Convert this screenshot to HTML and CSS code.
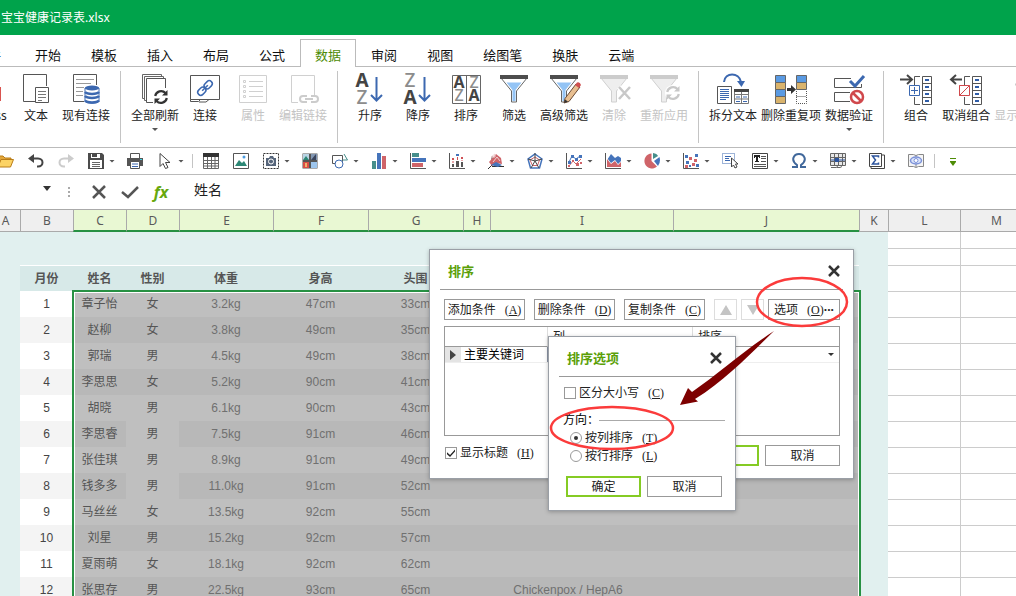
FILE: index.html
```html
<!DOCTYPE html>
<html lang="zh-CN">
<head>
<meta charset="utf-8">
<title>宝宝健康记录表.xlsx</title>
<link rel="stylesheet" href="styles.css">
</head>
<body>
<svg class="defs" width="0" height="0" aria-hidden="true">
  <defs>
    <symbol id="cells" viewBox="0 0 10 29"><path d="M.5.5h9v28h-9zM.5 7.5h9M.5 14.5h9M.5 21.5h9" fill="#fff" stroke="#555"/><path d="M3 4h4M3 11h4M3 18h4M3 25h4" stroke="#2f5da8" stroke-width="2"/></symbol>
    <symbol id="cycle" viewBox="0 0 16 16"><path d="M2.200 7a6 6 0 0 1 10.300-3M13.800 9A6 6 0 0 1 3.500 12" fill="none" stroke="currentColor" stroke-width="2.200"/><path d="M14.500 1v5.500H9zM1.500 15V9.500H7z" fill="currentColor"/></symbol>
    <symbol id="funnel" viewBox="0 0 32 32"><path d="M3 5h26L18.500 18v11h-5V18z" fill="#fff" stroke="#666"/><path d="M8.500 9.500h15L17.500 17v11h-3V17z" fill="#94c4f5"/><path d="M2 2h28v4H2z" fill="#4d4d4d"/></symbol>
    <symbol id="funnel-off" viewBox="0 0 32 32"><path d="M3 5h26L18.500 18v11h-5V18z" fill="#eee" stroke="#d0d0d0"/><path d="M2 2h28v4H2z" fill="#ccc"/></symbol>
  </defs>
</svg>

<header class="titlebar">宝宝健康记录表.xlsx</header>

<nav class="tabs">
  <button class="tab">文件</button>
  <button class="tab">开始</button>
  <button class="tab">模板</button>
  <button class="tab">插入</button>
  <button class="tab">布局</button>
  <button class="tab">公式</button>
  <button class="tab active">数据</button>
  <button class="tab">审阅</button>
  <button class="tab">视图</button>
  <button class="tab">绘图笔</button>
  <button class="tab">换肤</button>
  <button class="tab">云端</button>
</nav>

<section class="ribbon">
  <div class="group first">
    <button class="tool"><svg viewBox="0 0 32 32"><path d="M4 14h25v14H4z" fill="#d9534f"/></svg><span>Access</span></button>
    <button class="tool"><svg viewBox="0 0 32 32"><path d="M15 28.500H3.500v-27h23V13" fill="#fff" stroke="#555"/><path d="M15.500 14.500h13v15h-13z" fill="#fff" stroke="#555"/><path d="M18 18.500h8M18 21.500h8M18 24.500h8M18 27.500h4" stroke="#777"/></svg><span>文本</span></button>
    <button class="tool"><svg viewBox="0 0 32 32"><path d="M14 28.500H3.500v-27h23V12" fill="#fff" stroke="#555"/><path d="M6 6.500h18M6 10.500h15M6 14.500h8M6 18.500h7M6 22.500h7" stroke="#999"/><path d="M15 15v13c0 3 14 3 14 0V15z" fill="#fff" stroke="#3c68b0"/><ellipse cx="22" cy="15" rx="7" ry="2.500" fill="#3c68b0"/><path d="M15 19c2 2.500 12 2.500 14 0M15 23c2 2.500 12 2.500 14 0M15 27.500c2 2.500 12 2.500 14 0" fill="none" stroke="#3c68b0" stroke-width="2.500"/></svg><span>现有连接</span></button>
  </div>
  <div class="group">
    <button class="tool"><svg viewBox="0 0 32 32"><path d="M6 25.500H3.500v-24h19V3M8.500 27.500h-3v-24h19V5" fill="none" stroke="#666"/><path d="M14 29.500H7.500v-24h19V15" fill="#fff" stroke="#555"/><use href="#cycle" x="14" y="16" width="16" height="16" color="#333"/></svg><span>全部刷新</span><i class="caret"></i></button>
    <button class="tool"><svg viewBox="0 0 32 32"><path d="M1.500 2.500h29v24h-29z" fill="#fff" stroke="#555"/><path d="M1.500 26.500v2h8l2-2M10 29h7l3-2.500" fill="none" stroke="#555"/><g fill="none" stroke="#3c68b0" stroke-width="1.500" transform="rotate(-45 16 15)"><rect x="7" y="12" width="9" height="6" rx="3"/><rect x="16" y="12" width="9" height="6" rx="3"/><path d="M12 15h8"/></g></svg><span>连接</span></button>
    <button class="tool off" disabled><svg viewBox="0 0 32 32"><path d="M2.500 2.500h27v27h-27z" fill="#fff" stroke="#d0d0d0"/><path d="M12 8.500h14M12 13.500h14M12 18.500h14M12 23.500h14" stroke="#d0d0d0"/><path d="M6.500 7.500h2v2h-2zM6.500 12.500h2v2h-2zM6.500 17.500h2v2h-2zM6.500 22.500h2v2h-2z" fill="none" stroke="#d0d0d0"/></svg><span>属性</span></button>
    <button class="tool off" disabled><svg viewBox="0 0 32 32"><path d="M11 29.500H4.500v-27h23V22" fill="#fff" stroke="#d0d0d0"/><g fill="none" stroke="#ccc" stroke-width="2"><path d="M20 23h-4a3 3 0 0 0 0 6h4M24 23h4a3 3 0 0 1 0 6h-4M18 26h8"/></g></svg><span>编辑链接</span></button>
  </div>
  <div class="group">
    <button class="tool"><svg viewBox="0 0 32 32"><text class="az dark" x="8" y="14">A</text><text class="az" x="8" y="31">Z</text><path d="M22.500 4v24M17 22l5.500 5.500L28 22" fill="none" stroke="#3c68b0" stroke-width="2"/></svg><span>升序</span></button>
    <button class="tool"><svg viewBox="0 0 32 32"><text class="az" x="8" y="14">Z</text><text class="az dark" x="8" y="31">A</text><path d="M22.500 4v24M17 22l5.500 5.500L28 22" fill="none" stroke="#3c68b0" stroke-width="2"/></svg><span>降序</span></button>
    <button class="tool"><svg viewBox="0 0 32 32"><path d="M2.500 2.500h28v28h-28zM16.500 2.500v28" fill="#fff" stroke="#666"/><text class="az small dark" x="9" y="15">A</text><text class="az small" x="24" y="15">Z</text><text class="az small" x="9" y="28">Z</text><text class="az small dark" x="24" y="28">A</text></svg><span>排序</span></button>
    <button class="tool"><svg viewBox="0 0 32 32"><use href="#funnel" width="32" height="32"/></svg><span>筛选</span></button>
    <button class="tool"><svg viewBox="0 0 32 32"><use href="#funnel" width="32" height="32"/><path d="M17 25.500 28 11l4 3-11 14.500-5 1.500z" fill="#e8bf91" stroke="#6b4a35"/><path d="m27 12 2-2.500q3-1 4 2.500l-2 3z" fill="#cf5050"/><path d="m16 30 1-3.500 3 2z" fill="#333"/></svg><span>高级筛选</span></button>
    <button class="tool off" disabled><svg viewBox="0 0 32 32"><use href="#funnel-off" width="32" height="32"/><path d="m21 14 11 12M32 14 21 26" stroke="#fff" stroke-width="5"/><path d="m21 14 11 12M32 14 21 26" stroke="#c8c8c8" stroke-width="2.500"/></svg><span>清除</span></button>
    <button class="tool off" disabled><svg viewBox="0 0 32 32"><use href="#funnel-off" width="32" height="32"/><circle cx="25" cy="20" r="8" fill="#fff"/><use href="#cycle" x="17" y="12" width="16" height="16" color="#c8c8c8"/></svg><span>重新应用</span></button>
  </div>
  <div class="group">
    <button class="tool"><svg viewBox="0 0 32 32"><path d="M.5 13.500h14v17H.5z" fill="#fff" stroke="#555"/><path d="M3 16.500h9M3 18.500h9M3 20.500h9M3 22.500h9M3 24.500h9M3 26.500h6" stroke="#3c68b0"/><path d="M17.500 16.500h14v14h-14zM17 21.500h15M17 26h15M24.500 18v13" fill="#fff" stroke="#777"/><path d="M17 16h15v3H17z" fill="#444"/><path d="M19 24h4M26 24h4M19 28.500h4M26 28.500h4" stroke="#3c68b0"/><path d="M7 9C8-1 22-1 24 9" fill="none" stroke="#3c68b0" stroke-width="2"/><path d="M20 8h8l-3.500 6z" fill="#3c68b0"/></svg><span>拆分文本</span></button>
    <button class="tool"><svg viewBox="0 0 32 32"><path d="M.5 2.500h10v7H.5zM.5 16.500h10v7H.5zM21.500 2.500h10v7h-10z" fill="#5a9ae2" stroke="#666"/><path d="M.5 9.500h10v7H.5zM.5 23.500h10v7H.5zM21.500 9.500h10v7h-10z" fill="#d9b36c" stroke="#666"/><path d="M21.500 18v12.500h10V17M21.500 23.500h10" fill="none" stroke="#555" stroke-dasharray="1 1"/><path d="M12 15h4v-3l5 4.500-5 4.500v-3h-4z" fill="#333"/></svg><span>删除重复项</span></button>
    <button class="tool"><svg viewBox="0 0 32 32"><path d="M18 5.500H1.500v9h27V11M17 19.500H1.500v9H17" fill="none" stroke="#555"/><path d="m17 8 5 5L31 3" fill="none" stroke="#3c68b0" stroke-width="3"/><circle cx="24" cy="24" r="6" fill="#fff" stroke="#d0484c" stroke-width="2.500"/><path d="m20 20 8 8" stroke="#d0484c" stroke-width="2.500"/></svg><span>数据验证</span><i class="caret"></i></button>
  </div>
  <div class="group last">
    <button class="tool"><svg viewBox="0 0 32 32"><path d="M0 6.500h11M7 2l5 4.500L7 11" fill="none" stroke="#444" stroke-width="2"/><path d="M20 3.500h-5.500V12M14.500 24v7.500H20" fill="none" stroke="#555"/><path d="M9.500 12.500h10v10h-10zM11 17.500h7M14.500 14v7" fill="#fff" stroke="#3c68b0"/><use href="#cells" x="22" y="3" width="10" height="29"/></svg><span>组合</span></button>
    <button class="tool"><svg viewBox="0 0 32 32"><path d="M1 6.500h11M6 2 1 6.500 6 11" fill="none" stroke="#444" stroke-width="2"/><path d="M20 3.500h-5.500V12M14.500 24v7.500H20" fill="none" stroke="#555"/><path d="M9.500 12.500h10v10h-10zl0 10 10-10" fill="#fff" stroke="#d0484c"/><use href="#cells" x="22" y="3" width="10" height="29"/></svg><span>取消组合</span></button>
    <button class="tool off" disabled><svg viewBox="0 0 32 32"><path d="M1 11.500h12M7 6v11" stroke="#ccc" stroke-width="2"/></svg><span>显示明细数据</span></button>
  </div>
</section>

<section class="quickbar">
  <button class="q" aria-label="打开"><svg viewBox="0 0 16 16"><path d="M0 13V3h5l2 2h6v3M0 13" fill="#e2a63a" stroke="#b97c17"/><path d="M0 14 3 6.500h12.500L12.500 14z" fill="#fcd364" stroke="#b97c17"/></svg></button>
  <button class="q" aria-label="撤销"><svg viewBox="0 0 16 16"><path d="M2 5.500h8c6 0 6 8 0 8H9" fill="none" stroke="#444" stroke-width="2"/><path d="M0 5.500 6 1v9z" fill="#444"/></svg></button>
  <button class="q" aria-label="重做"><svg viewBox="0 0 16 16"><path d="M14 5.500H6c-6 0-6 8 0 8h1" fill="none" stroke="#ccc" stroke-width="2"/><path d="m16 5.500-6-4.500v9z" fill="#ccc"/></svg></button>
  <button class="q" aria-label="保存"><svg viewBox="0 0 16 16"><path d="M0 0h14l2 2v14H0z" fill="#4b4b4b"/><path d="M3 1h9v4H3zM2 7h12v8H2z" fill="#fff"/><path d="M4 0h5v4H4z" fill="#4b4b4b"/><path d="M4 9.500h8M4 11.500h8M4 13.500h8" stroke="#666"/></svg><i class="caret"></i></button>
  <button class="q" aria-label="打印"><svg viewBox="0 0 16 16"><path d="M3.500.5h9V6h-9z" fill="#fff" stroke="#555"/><path d="M0 5h16v8H0z" fill="#555"/><path d="M13 6h2v1h-2z" fill="#3dd3e5"/><path d="M3.500 8.500h9v7h-9z" fill="#fff" stroke="#555"/><path d="M5 11h6M5 13.500h6" stroke="#3c68b0"/></svg></button>
  <button class="q" aria-label="选择"><svg viewBox="0 0 16 16"><path d="M3 .5v13l3-3 2.500 5 2.500-1-2.500-5H13z" fill="#fff" stroke="#444"/></svg><i class="caret"></i></button>
  <hr class="bar">
  <button class="q" aria-label="表格"><svg viewBox="0 0 16 16"><path d="M.5.5h15v15H.5zM0 7.500h16M0 10.500h16M0 13h16M4.500 4v12M8.500 4v12M12 4v12" fill="#fff" stroke="#666"/><path d="M0 0h16v4H0z" fill="#333"/></svg></button>
  <button class="q" aria-label="图片"><svg viewBox="0 0 16 16"><path d="M.5.5h15v15H.5z" fill="#fff" stroke="#555"/><path d="m2 13 4-6 3 3 2-2 3 5z" fill="#2c8775"/><circle cx="11" cy="4" r="1.500" fill="#4a9be0"/></svg></button>
  <button class="q" aria-label="照相机"><svg viewBox="0 0 16 16"><path d="M.5.5h15v15H.5z" fill="none" stroke="#333" stroke-dasharray="2 1"/><path d="M3 5h3l1-2h3l1 2h2v8H3z" fill="#56657a"/><circle cx="8" cy="8.500" r="2.500" fill="#56657a" stroke="#fff"/></svg><i class="caret"></i></button>
  <button class="q" aria-label="图库"><svg viewBox="0 0 16 16"><path d="M.5.500h15v15H.500z" fill="#555"/><path d="M1 1h6v6H1z" fill="#b9d4e4"/><path d="m1 7 3-4 3 4z" fill="#2c8775"/><path d="M9 1h6v6H9z" fill="#8297b3"/><path d="m9 7 5-6v6z" fill="#39445c"/><path d="M1 9h6v6H1z" fill="#d84e47"/><path d="M3 10h2v4H3z" fill="#f1b16b"/><path d="M9 9h6v6H9z" fill="#9dc5ec"/></svg></button>
  <button class="q" aria-label="形状"><svg viewBox="0 0 16 16"><path d="M.5 2.500h10v8H.5z" fill="#fff" stroke="#555"/><circle cx="7" cy="11" r="4" fill="#fff" stroke="#3c68b0"/><path d="m12 1 3.500 6h-5" fill="none" stroke="#468e8b"/></svg><i class="caret"></i></button>
  <button class="q" aria-label="柱形图"><svg viewBox="0 0 16 16"><path d="M1 8h4v8H1z" fill="#468e8b"/><path d="M6 0h4v16H6z" fill="#4574bb"/><path d="M11 3h4v13h-4z" fill="#cf6469"/></svg><i class="caret"></i></button>
  <button class="q" aria-label="条形图"><svg viewBox="0 0 16 16"><path d="M.5 0v15.500H16" fill="none" stroke="#555"/><path d="M2 0h7v4H2z" fill="#468e8b"/><path d="M2 5h14v4H2z" fill="#4574bb"/><path d="M2 10h11v4H2z" fill="#cf6469"/></svg><i class="caret"></i></button>
  <button class="q" aria-label="股价图"><svg viewBox="0 0 16 16"><path d="M.5 0v15.500H16" fill="none" stroke="#555"/><path d="M3 11h2v3H3zM7 8h3v6H7zM12 9h2v5h-2z" fill="#555"/><path d="M3 5h2v2H3zM12 4h2v2h-2z" fill="#cf4f54"/><path d="M7 1h3v2H7z" fill="#4574bb"/><path d="M4 8v2M8.500 4v3M13 7v1" stroke="#cf4f54"/></svg><i class="caret"></i></button>
  <button class="q" aria-label="曲面图"><svg viewBox="0 0 16 16"><path d="m0 16 4-4V3M4 13.500h12" fill="none" stroke="#333"/><path d="m1 9 7-8 5 4 1 6-6-1-4 3z" fill="#cf6469"/><path d="m3 12 5-3 6 3-4 2z" fill="#4574bb"/><path d="m3 4 4-3v3zM5 9l4-5 3 4" fill="none" stroke="#f2d3d4"/></svg><i class="caret"></i></button>
  <button class="q" aria-label="雷达图"><svg viewBox="0 0 16 16"><path d="m8 1 7 5-2.500 9h-9L1 6z" fill="#fff" stroke="#4574bb" stroke-width="1.500"/><path d="m8 4 4.500 3-2 5.500h-5L3 7z" fill="none" stroke="#cf6469"/><path d="M8 0v8M8 8l7-2M8 8l4 7M8 8l-4 7M8 8 1 6" stroke="#444"/></svg><i class="caret"></i></button>
  <button class="q" aria-label="折线图"><svg viewBox="0 0 16 16"><path d="M.5 0v15.500H16" fill="none" stroke="#555"/><path d="m3 9 3-6 4 3 4-3" fill="none" stroke="#4574bb"/><path d="m3 13 4-5 3 3 5-5" fill="none" stroke="#cf6469"/><path d="M2 8h3v3H2zM5 2h3v3H5zM9 5h3v3H9zM13 2h3v3h-3z" fill="#4574bb"/><path d="M2 12h2v2H2zM6 7h2v2H6zM10 10h3v3h-3zM14 9h2v2h-2z" fill="#cf6469"/></svg><i class="caret"></i></button>
  <button class="q" aria-label="面积图"><svg viewBox="0 0 16 16"><path d="m2 7 4-6 4 4 3-2 3 2v8H2z" fill="#4574bb"/><path d="m2 5 4 5 4-3 3 4 3-3v7H2z" fill="#fff"/><path d="m2 6 4 5 4-3 3 4 3-3v5H2z" fill="#cf6469"/><path d="M.5 0v15.500H16" fill="none" stroke="#555"/></svg><i class="caret"></i></button>
  <button class="q" aria-label="饼图"><svg viewBox="0 0 16 16"><path d="M7.500 8V.5a7.500 7.500 0 1 0 5.500 13z" fill="#cf6469"/><path d="M9 6V0q4 .5 5 3z" fill="#468e8b"/><path d="m10 8 5.500-4q1.500 5-1.500 9z" fill="#4574bb"/></svg><i class="caret"></i></button>
  <button class="q" aria-label="散点图"><svg viewBox="0 0 16 16"><path d="M.5 0v15.500H16" fill="none" stroke="#555"/><path d="M6 4h3v3H6zM11 6h3v3h-3zM2 12h3v3H2zM9 10h3v3H9z" fill="#cf6469"/><path d="M2 2h3v3H2zM12 1h3v3h-3zM3 8h3v3H3zM6 12h2v2H6zM13 11h3v3h-3z" fill="#4574bb"/></svg><i class="caret"></i></button>
  <button class="q" aria-label="选择对象"><svg viewBox="0 0 16 16"><path d="M.5.5h12v10H.5z" fill="none" stroke="#3c68b0" stroke-dasharray="1 1"/><path d="M3 3.500h6M3 5.500h4M3 7.500h5" stroke="#3c68b0"/><path d="M9.500 5v9l2-2 1.500 3 2-1-1.500-3H16z" fill="#fff" stroke="#444"/></svg></button>
  <button class="q" aria-label="文本框"><svg viewBox="0 0 16 16"><path d="M.5.5h15v15H.5z" fill="#fff" stroke="#444"/><path d="M2 2h6v3H7V4H6v4h1v1H3V8h1V4H3v1H2z" fill="#222"/><path d="M9 3.500h5M9 5.500h5M9 8.500h5M2 11.500h12M2 13.500h12" stroke="#555"/></svg><i class="caret"></i></button>
  <button class="q" aria-label="符号"><svg viewBox="0 0 16 16"><path d="M1 14h5v-2C-1 7 3 1 8 1s9 6 2 11v2h5" fill="none" stroke="#41689b" stroke-width="2"/></svg><i class="caret"></i></button>
  <button class="q" aria-label="单元格"><svg viewBox="0 0 16 16"><path d="M.5.5h15v12H.5zM0 4.500h16M0 8.500h16M4.500 0v13M8.500 0v13M12.500 0v13M1 14.500h5l2-1M7 14.500h3l2-1" fill="#e8e8e8" stroke="#666"/><path d="M5 5h4v4H5z" fill="#2c549d"/><path d="M1 7h14" stroke="#2c549d"/></svg><i class="caret"></i></button>
  <button class="q" aria-label="求和"><svg viewBox="0 0 16 16"><path d="M2 2h13.500v13.500H2z" fill="#fff" stroke="#444"/><path d="M.5.5h12v13H.5z" fill="#fff" stroke="#444"/><path d="M9.500 4.500V3H3.500l3 4-3 4h6V9.500" fill="none" stroke="#2c549d" stroke-width="1.500"/></svg><i class="caret"></i></button>
  <button class="q" aria-label="显示"><svg viewBox="0 0 16 16"><path d="M.5 1.500h5l2.500 1 2.500-1h5v12h-5l-2.500 1-2.500-1h-5zM8 2v2M8 11v3" fill="#f5f5f5" stroke="#888"/><ellipse cx="8" cy="7.500" rx="5.500" ry="3.500" fill="#dce5fb" stroke="#7b91d8" stroke-width="1.500"/><circle cx="8" cy="7.500" r="2" fill="#fff" stroke="#7b91d8"/></svg></button>
  <hr class="bar">
  <button class="q" aria-label="更多"><svg viewBox="0 0 16 16"><path d="M5 5h6v1H5zM5 9h6l-3 4z" fill="#4e8c06"/><path d="M5 8h6v1H5z" fill="#4e8c06"/></svg></button>
</section>

<section class="formula">
  <button class="namebox" aria-label="名称框"><i class="caret big"></i></button>
  <span class="grip"><i></i><i></i><i></i></span>
  <button class="f" aria-label="取消"><svg viewBox="0 0 20 16"><path d="m4 2 12 12M16 2 4 14" stroke="#555" stroke-width="2.500"/></svg></button>
  <button class="f" aria-label="输入"><svg viewBox="0 0 20 16"><path d="m2 8 6 5L18 3" fill="none" stroke="#555" stroke-width="2.500"/></svg></button>
  <button class="f fx">fx</button>
  <input class="entry" value="姓名" aria-label="编辑栏">
</section>

<main class="sheet">
  <table class="grid">
    <colgroup><col class="ca"><col class="cb"><col class="cb"><col class="cb"><col class="ce"><col class="cf"><col class="cf"><col class="ch"><col class="ci"><col class="cj"><col class="ck"><col class="cl"><col></colgroup>
    <thead>
      <tr><th>A</th><th>B</th><th class="sel">C</th><th class="sel">D</th><th class="sel">E</th><th class="sel">F</th><th class="sel">G</th><th class="sel">H</th><th class="sel">I</th><th class="sel">J</th><th>K</th><th>L</th><th>M</th></tr>
    </thead>
    <tbody>
      <tr class="gap1"><td colspan="11"></td><td class="g"></td><td class="g"></td></tr>
      <tr class="gap2"><td colspan="11"></td><td class="g"></td><td class="g"></td></tr>
      <tr class="head"><td></td><th>月份</th><th>姓名</th><th>性别</th><th>体重</th><th>身高</th><th>头围</th><th colspan="2"></th><th></th><td></td><td class="g"></td><td class="g"></td></tr>
      <tr class="r"><td></td><td class="n">1</td><td class="s d">章子怡</td><td class="s d">女</td><td class="s">3.2kg</td><td class="s">47cm</td><td class="s">33cm</td><td class="s" colspan="2"></td><td class="s"></td><td></td><td class="g"></td><td class="g"></td></tr>
      <tr class="r alt"><td></td><td class="n">2</td><td class="s d">赵柳</td><td class="s d">女</td><td class="s">3.8kg</td><td class="s">49cm</td><td class="s">35cm</td><td class="s" colspan="2"></td><td class="s"></td><td></td><td class="g"></td><td class="g"></td></tr>
      <tr class="r"><td></td><td class="n">3</td><td class="s d">郭瑞</td><td class="s d">男</td><td class="s">4.5kg</td><td class="s">49cm</td><td class="s">38cm</td><td class="s" colspan="2"></td><td class="s"></td><td></td><td class="g"></td><td class="g"></td></tr>
      <tr class="r alt"><td></td><td class="n">4</td><td class="s d">李思思</td><td class="s d">女</td><td class="s">5.2kg</td><td class="s">90cm</td><td class="s">41cm</td><td class="s" colspan="2"></td><td class="s"></td><td></td><td class="g"></td><td class="g"></td></tr>
      <tr class="r"><td></td><td class="n">5</td><td class="s d">胡晓</td><td class="s d">男</td><td class="s">6.1kg</td><td class="s">90cm</td><td class="s">43cm</td><td class="s" colspan="2"></td><td class="s"></td><td></td><td class="g"></td><td class="g"></td></tr>
      <tr class="r alt"><td></td><td class="n">6</td><td class="s d">李思睿</td><td class="s d plain">男</td><td class="s">7.5kg</td><td class="s">91cm</td><td class="s">46cm</td><td class="s" colspan="2"></td><td class="s"></td><td></td><td class="g"></td><td class="g"></td></tr>
      <tr class="r"><td></td><td class="n">7</td><td class="s d">张佳琪</td><td class="s d">男</td><td class="s">8.9kg</td><td class="s">91cm</td><td class="s">49cm</td><td class="s" colspan="2"></td><td class="s"></td><td></td><td class="g"></td><td class="g"></td></tr>
      <tr class="r alt"><td></td><td class="n">8</td><td class="s d">钱多多</td><td class="s d plain">男</td><td class="s">11.0kg</td><td class="s">91cm</td><td class="s">52cm</td><td class="s" colspan="2"></td><td class="s"></td><td></td><td class="g"></td><td class="g"></td></tr>
      <tr class="r"><td></td><td class="n">9</td><td class="s d">马丝丝</td><td class="s d">女</td><td class="s">13.5kg</td><td class="s">92cm</td><td class="s">55cm</td><td class="s" colspan="2"></td><td class="s"></td><td></td><td class="g"></td><td class="g"></td></tr>
      <tr class="r alt"><td></td><td class="n">10</td><td class="s d">刘星</td><td class="s d">男</td><td class="s">15.2kg</td><td class="s">92cm</td><td class="s">57cm</td><td class="s" colspan="2"></td><td class="s"></td><td></td><td class="g"></td><td class="g"></td></tr>
      <tr class="r"><td></td><td class="n">11</td><td class="s d">夏雨萌</td><td class="s d">女</td><td class="s">18.1kg</td><td class="s">92cm</td><td class="s">62cm</td><td class="s" colspan="2"></td><td class="s"></td><td></td><td class="g"></td><td class="g"></td></tr>
      <tr class="r alt"><td></td><td class="n">12</td><td class="s d">张思存</td><td class="s d">男</td><td class="s">22.5kg</td><td class="s">93cm</td><td class="s">65cm</td><td class="s" colspan="2">Chickenpox / HepA6</td><td class="s"></td><td></td><td class="g"></td><td class="g"></td></tr>
    </tbody>
  </table>
  <div class="selection"></div>
</main>

<section class="dialog sort" role="dialog" aria-labelledby="sort-title">
  <header class="dlg-head"><h2 id="sort-title">排序</h2><button class="close" aria-label="关闭"><svg viewBox="0 0 12 12"><path d="m1 1 10 10M11 1 1 11" stroke="#333" stroke-width="2.500"/></svg></button></header>
  <div class="dlg-body">
    <div class="cmds">
      <button class="btn cmd">添加条件<span class="key">(<u>A</u>)</span></button>
      <button class="btn cmd">删除条件<span class="key">(<u>D</u>)</span></button>
      <button class="btn cmd">复制条件<span class="key">(<u>C</u>)</span></button>
      <div class="moves">
        <button class="btn move" disabled aria-label="上移"><svg viewBox="0 0 12 10"><path d="m6 0 6 10H0z" fill="#c4c4c4"/></svg></button>
        <button class="btn move" disabled aria-label="下移"><svg viewBox="0 0 12 10"><path d="M0 0h12L6 10z" fill="#c4c4c4"/></svg></button>
        <button class="btn opt">选项<span class="key">(<u>O</u>)</span><span class="dots">···</span></button>
      </div>
    </div>
    <table class="keys">
      <thead><tr><th colspan="2" class="k1"></th><th class="k2">列</th><th>排序</th></tr></thead>
      <tbody><tr><td class="mark"><svg viewBox="0 0 6 10"><path d="m0 0 6 5-6 5z" fill="#444"/></svg></td><td class="kw">主要关键词</td><td class="kcol"></td><td class="order"><i class="caret"></i></td></tr></tbody>
    </table>
    <div class="foot">
      <label class="check"><input type="checkbox" checked><span>显示标题</span><span class="key">(<u>H</u>)</span></label>
      <button class="btn wide primary" aria-label="确定"></button>
      <button class="btn wide">取消</button>
    </div>
  </div>
</section>

<section class="dialog options" role="dialog" aria-labelledby="options-title">
  <header class="dlg-head"><h2 id="options-title">排序选项</h2><button class="close" aria-label="关闭"><svg viewBox="0 0 12 12"><path d="m1 1 10 10M11 1 1 11" stroke="#333" stroke-width="2.500"/></svg></button></header>
  <label class="check case"><input type="checkbox"><span>区分大小写</span><span class="key">(<u>C</u>)</span></label>
  <fieldset class="dir">
    <legend>方向：</legend>
    <label class="check"><input type="radio" name="dir" checked><span>按列排序</span><span class="key">(<u>T</u>)</span></label>
    <label class="check"><input type="radio" name="dir"><span>按行排序</span><span class="key">(<u>L</u>)</span></label>
  </fieldset>
  <div class="acts">
    <button class="btn wide primary">确定</button>
    <button class="btn wide">取消</button>
  </div>
</section>

<svg class="marks" width="1016" height="596" viewBox="0 0 1016 596" aria-hidden="true">
  <ellipse cx="802" cy="302" rx="45" ry="24" fill="none" stroke="#fb3b3b" stroke-width="2.500"/>
  <ellipse cx="612" cy="428" rx="61" ry="21" fill="none" stroke="#fb3b3b" stroke-width="2.500"/>
  <path d="M680 405 688 388l4 4C718 374 742 352 774 331C752 352 726 380 695 399l3 2.500z" fill="#7d0000"/>
</svg>
</body>
</html>
```

FILE: styles.css
```css
* { box-sizing: border-box; }

body {
  margin: 0;
  min-height: 100vh;
  position: relative;
  overflow: hidden;
  background: #fff;
  color: #222;
  font: 12px/16px "Noto Sans", "Noto Sans CJK SC", sans-serif;
}

button, input {
  font: inherit;
  color: inherit;
  padding: 0;
  border: 0;
  margin: 0;
  background: none;
}

svg { display: block; }
.defs, .marks { position: absolute; top: 0; left: 0; pointer-events: none; }

.titlebar {
  height: 35px;
  padding: 0 1px;
  line-height: 35px;
  background: #00a34b;
  color: #fff;
}

/* Ribbon tabs */
.tabs {
  display: flex;
  height: 32px;
  padding-top: 4px;
  border-bottom: 1px solid #bbb;
  white-space: nowrap;
}
.tab {
  flex: none;
  height: 28px;
  padding: 4px 15px 0;
  font-size: 13px;
  line-height: 24px;
  color: #111;
}
.tab:first-child { margin-left: -40px; margin-right: 4px; }
.tab.active {
  padding: 3px 14px 0;
  border: 1px solid #bbb;
  border-bottom: 0;
  background: #fff;
  color: #4e8c06;
}

/* Ribbon */
.ribbon {
  display: flex;
  height: 80px;
  padding: 4px 0;
}
.group {
  display: flex;
  flex: none;
  padding: 0 8px;
  border-right: 1px solid #c4c4c4;
}
.group.first { margin-left: -44px; }
.group.last { border-right: 0; }
.tool {
  display: flex;
  flex-direction: column;
  align-items: center;
  flex: none;
  min-width: 48px;
  padding: 2px 2px 0;
  white-space: nowrap;
}
.tool svg { width: 32px; height: 32px; overflow: visible; }
.tool span { margin-top: 3px; line-height: 16px; }
.tool.off { color: #c4c4c4; }
.caret {
  display: block;
  width: 6px;
  height: 3px;
  background: #555;
  clip-path: polygon(0 0, 100% 0, 50% 100%);
}
.tool .caret { margin-top: 4px; }
.az { font: 500 19px "Noto Sans", sans-serif; fill: #8c8c8c; text-anchor: middle; }
.az.small { font-size: 16px; }
.az.dark { font-weight: bold; fill: #444; }

/* Quick access bar */
.quickbar {
  display: flex;
  align-items: center;
  height: 28px;
  border: solid #bbb;
  border-width: 1px 0;
}
.q {
  display: flex;
  align-items: center;
  flex: none;
  gap: 5px;
  padding: 0 7px;
}
.q:first-child { margin-left: -9px; }
.q svg { width: 16px; height: 16px; }
.q:has(.caret) { padding-right: 5px; }
.bar { width: 1px; height: 14px; margin: 0 3px; border: 0; background: #c4c4c4; }

/* Formula bar */
.formula {
  display: flex;
  align-items: center;
  height: 34px;
}
.namebox { display: flex; justify-content: flex-end; width: 51px; padding-bottom: 7px; }
.caret.big { width: 8px; height: 5px; background: #333; }
.grip { display: grid; gap: 2px; width: 38px; padding-left: 17px; }
.grip i { width: 2px; height: 2px; background: #aaa; }
.f { width: 20px; margin-right: 11px; }
.f svg { width: 20px; height: 16px; }
.fx { margin-right: 23px; font: italic bold 16px/18px "Open Sans", sans-serif; color: #67a80d; }
.entry { flex: 1; padding-bottom: 5px; font-size: 14px; line-height: 20px; outline: 0; }

/* Worksheet */
.sheet { position: relative; overflow: hidden; }
.grid {
  width: calc(100% + 26px);
  margin-left: -10px;
  table-layout: fixed;
  border-collapse: separate;
  border-spacing: 0;
  font: 12px/16px "Liberation Sans", "Noto Sans CJK SC", sans-serif;
  text-align: center;
}
.ca { width: 30px; }
.cb { width: 53px; }
.ce { width: 94px; }
.cf { width: 95px; }
.ch { width: 27px; }
.ci { width: 183px; }
.cj { width: 186px; }
.ck { width: 29px; }
.cl { width: 72px; }
.grid th, .grid td { padding: 0; }
.grid td { background: #e1f0ef; }
.grid thead th {
  height: 23px;
  border: solid #aaa;
  border-width: 1px 0 1px 1px;
  background: #efefef;
  font: 12px/16px "Noto Sans", sans-serif;
  color: #5a5a5a;
}
.grid thead .sel { padding-top: 1px; border-bottom: 2px solid #279143; background: #e9f8d3; }
.gap1 td { height: 16px; }
.gap2 td { height: 17px; }
.head th, .r td { height: 26px; }
.head th {
  border-top: 1px solid #fff;
  background: #d7e9e8;
  color: #555;
}
.grid .g { border: solid #ccc; border-width: 1px 0 0 1px; background: #fff; }
.gap1 .g { border-top: 0; }
.grid .g:nth-last-child(2) { border-left: 0; }
.grid .n { background: #fff; color: #444; }
.grid .s { background: #bfbfbf; color: #707070; }
.grid .d { color: #555; }
.grid .alt .n { background: #f4f4f4; }
.grid .alt .s { background: #b8b8b8; }
.grid .alt .plain { background: #bfbfbf; }
.selection {
  position: absolute;
  top: 81px;
  bottom: -4px;
  left: 72px;
  width: 789px;
  border: 2px solid #279143;
  box-shadow: inset 0 0 0 1px #fff;
}

/* Dialogs */
.dialog {
  position: absolute;
  border: 1px solid #9a9fa6;
  background: #fff;
  color: #222;
  box-shadow: 0 1px 4px rgba(0, 0, 0, .25);
}
.sort { top: 249px; left: 429px; width: 425px; }
.options { top: 336px; left: 548px; width: 188px; height: 175px; padding: 0 10px; }
.dlg-head {
  display: flex;
  align-items: center;
  justify-content: space-between;
  height: 40px;
  margin: 0 10px;
  padding: 2px 3px 0 8px;
  border-bottom: 1px solid #999;
}
.options .dlg-head { margin: 0; }
.dlg-head h2 { margin: 0; font-size: 13px; line-height: 20px; color: #5ba008; }
.close svg { width: 12px; height: 12px; }
.dlg-body { padding: 9px 13px 12px 14px; }
.btn {
  height: 21px;
  border: 1px solid #999;
  background: #fff;
  line-height: 16px;
  white-space: nowrap;
}
.key { margin-left: 9px; font-family: "Liberation Serif", serif; }
.cmds { display: flex; gap: 9px; }
.cmd { width: 81px; }
.moves { display: flex; gap: 4px; }
.move { display: flex; align-items: center; justify-content: center; width: 23px; border-color: #ddd; }
.move svg { width: 12px; height: 10px; }
.opt { width: 72px; }
.dots { font-weight: bold; }
.keys {
  display: block;
  width: 100%;
  height: 110px;
  margin-top: 6px;
  border: 1px solid #999;
}
.keys thead, .keys tbody { display: block; }
.keys tr { display: flex; }
.keys th {
  width: 145px;
  height: 20px;
  padding: 0 5px;
  border-bottom: 1px solid #999;
  border-left: 1px solid #ddd;
  font-weight: normal;
  line-height: 20px;
  text-align: left;
}
.keys th:last-child { flex: 1; }
.keys .k1 { width: 102px; border-left: 0; }
.keys td { height: 16px; padding: 0; border-bottom: 1px solid #eee; line-height: 15px; }
.keys .mark { display: flex; align-items: center; justify-content: center; width: 16px; background: #e4e4e4; }
.mark svg { width: 6px; height: 10px; }
.keys .kw { width: 86px; padding-left: 3px; color: #000; }
.keys .kcol { width: 145px; background: #8d96a8; }
.keys .order { display: flex; flex: 1; align-items: center; justify-content: flex-end; padding-right: 5px; }
.order .caret { background: #333; }
.foot { display: flex; gap: 6px; margin-top: 9px; }
.foot .check { flex: 1; height: 16px; }
.wide { width: 75px; }
.primary { border: 2px solid #85cb24; }
.check { display: flex; align-items: center; }
.check input {
  appearance: none;
  flex: none;
  display: grid;
  place-items: center;
  width: 12px;
  height: 12px;
  margin: 0 3px 0 1px;
  border: 1px solid #999;
  background: #fff;
}
.check input[type="checkbox"]:checked::before {
  content: "";
  width: 8px;
  height: 8px;
  background: #222;
  clip-path: polygon(0 40%, 38% 75%, 100% 5%, 100% 30%, 38% 100%, 0 65%);
}
.check input[type="radio"] { border-radius: 50%; }
.check input[type="radio"]:checked::before { content: ""; width: 4px; height: 4px; border-radius: 50%; background: #333; }
.options .case { height: 16px; margin: 8px 0 0 4px; }
.dir { margin: 10px 0 0; padding: 0 0 0 10px; border: 0; }
.dir legend { display: flex; align-items: center; width: 162px; margin-left: -6px; padding: 0; line-height: 18px; color: #000; }
.dir legend::after { content: ""; flex: 1; height: 1px; background: #aaa; }
.dir .check { height: 18px; }
.acts { display: flex; gap: 6px; margin: 11px 0 0 7px; }
```
